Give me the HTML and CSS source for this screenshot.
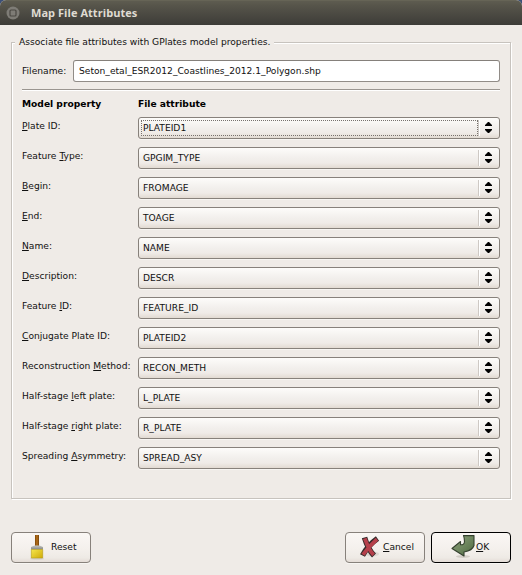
FILE: index.html
```html
<!DOCTYPE html>
<html lang="en">
<head>
<meta charset="utf-8">
<title>Map File Attributes</title>
<link rel="stylesheet" href="styles.css">
</head>
<body>
<div class="window">
  <header class="titlebar">
    <svg class="close" width="14" height="14" viewBox="0 0 14 14"><circle cx="7" cy="7" r="6.500" fill="#7e7c76"/><rect x="4" y="4" width="6" height="6" rx="1" fill="#7e7c76" stroke="#4b4943" stroke-width="1.2"/></svg>
    <h1>Map File Attributes</h1>
  </header>
  <main>
    <fieldset class="group">
      <legend>Associate file attributes with GPlates model properties.</legend>
      <div class="file"><label for="fn">Filename:</label><input id="fn" type="text" value="Seton_etal_ESR2012_Coastlines_2012.1_Polygon.shp"></div>
      <div class="rule"></div>
      <div class="row head"><b>Model property</b><b>File attribute</b></div>
      <div id="rows"></div>
    </fieldset>
    <footer>
      <button class="btn reset">
        <svg width="24" height="26" viewBox="0 0 24 26">
          <defs>
            <linearGradient id="y" x2="1" y2="1"><stop offset="0" stop-color="#f5e64c"/><stop offset="1" stop-color="#cfaa08"/></linearGradient>
            <linearGradient id="w"><stop stop-color="#7d4606"/><stop offset=".5" stop-color="#b8721c"/><stop offset="1" stop-color="#70400a"/></linearGradient>
            <linearGradient id="m" x2="0" y2="1"><stop stop-color="#c4c5c2"/><stop offset="1" stop-color="#858783"/></linearGradient>
          </defs>
          <ellipse cx="12" cy="23.800" rx="7" ry="1" fill="#d5d0c9"/>
          <path d="M10 0h4V11.500h-4z" fill="url(#w)"/>
          <path d="M6 14.500V12l3.500-1.500h5L18 12v2.500z" fill="url(#m)"/>
          <path d="M6.300 14.500h11.400V23H6.300z" fill="url(#y)" stroke="#b39a14" stroke-width=".6"/>
        </svg>
        <span>Reset</span>
      </button>
      <button class="btn cancel">
        <svg width="24" height="26" viewBox="0 0 24 26">
          <ellipse cx="14" cy="19" rx="7" ry="2.500" fill="#ddd8d2"/>
          <path d="M6.500 2.500C8.500 9 12.500 17 16 20.500M19.500 3.500C14.500 7 8 14 4.500 20.500" fill="none" stroke="#332b2b" stroke-width="5.600"/>
          <path d="M6.800 3.300C9 9.500 12.500 16.800 15.600 19.900M19 4.200C14.500 8 8.500 14.500 5 19.800" fill="none" stroke="#b5404b" stroke-width="3.800"/>
        </svg>
        <span><u>C</u>ancel</span>
      </button>
      <button class="btn ok">
        <svg width="24" height="26" viewBox="0 0 24 26">
          <defs><linearGradient id="g" x2="1" y2="1"><stop stop-color="#91a67f"/><stop offset="1" stop-color="#4d6840"/></linearGradient></defs>
          <ellipse cx="12" cy="21.500" rx="7" ry="1.500" fill="#d2cdc6"/>
          <path d="M12.500 .600h10.500V10.500Q21.500 15.500 13 17v4L1 13.500 9.500 6.500V9.800Q13.500 10 13.500 6.500 13.500 3 12.500 .600z" fill="url(#g)" stroke="#34402e" stroke-width="1.100" stroke-linejoin="round"/>
        </svg>
        <span><u>O</u>K</span>
      </button>
    </footer>
  </main>
</div>
<script src="rows.js"></script>
</body>
</html>
```
FILE: styles.css
```css
* { box-sizing: border-box; }
body { margin: 0; background: #3c5078; font: 9.13px "DejaVu Sans", sans-serif; color: #111; }
.window { width: 522px; height: 575px; background: #efebe7; border-radius: 6px 6px 0 0; overflow: hidden; }
.titlebar { height: 25px; padding: 0 0 0 6px; display: flex; align-items: center; gap: 11px; background: linear-gradient(#5e5c50, #56544a 20%, #3d3c38); border-top: 1px solid #666456; }
.titlebar h1 { margin: 0; font: 700 11px "Open Sans", sans-serif; color: #dfdbd2; letter-spacing: .05px; line-height: 24px; }
main { padding: 11px 11px 0; }
.group { margin: 0; height: 463px; min-width: 0; padding: 0 10px; border: 1px solid #c7c3be; box-shadow: 1px 1px #fff, inset 1px 1px #fff; }
legend { height: 13px; line-height: 12px; margin-left: -7px; padding: 0 4px; background: #efebe7; white-space: nowrap; }
.file { display: flex; align-items: center; height: 22px; margin-top: 11px; }
.file label { width: 51px; }
.file input { flex: 1; min-width: 0; height: 22px; padding: 0 5px 1px; border: 1px solid #918c87; border-top-color: #85807b; border-radius: 3px; font: inherit; color: inherit; background: #fff; outline: 0; }
.rule { height: 2px; margin-top: 7px; background: #9a9590; border-bottom: 1px solid #fff; }
.row { display: grid; grid-template-columns: 116px 362px; height: 30px; }
.head { height: 26px; line-height: 11px; padding-top: 8px; color: #000; }
.row label { line-height: 11px; padding-top: 4px; white-space: nowrap; }
u { text-decoration: underline; text-underline-offset: 1px; text-decoration-thickness: 1px; text-decoration-skip-ink: none; }
.combo { display: flex; align-items: center; height: 22px; border: 1px solid #87817b; border-radius: 3px; padding: 2px 7px 2px 2px; background: linear-gradient(#fdfcfa, #f2efec 50%, #efebe7 75%, #e2dad2); box-shadow: 0 1px #f7f5f2; }
.combo span { flex: 1; height: 16px; line-height: 16px; border: 1px solid transparent; padding: 0 1px; display: flex; align-items: center; }
.combo.focus span { border: 1px dotted #77726d; }
.combo i { width: 2px; height: 16px; background: #cec9c4; border-right: 1px solid #fff; }
.combo svg { margin-left: 5px; }
footer { display: flex; margin-top: 33px; }
.btn { width: 80px; height: 31px; padding: 0; display: flex; align-items: center; border: 1px solid #87817b; border-radius: 4px; background: linear-gradient(#faf7f4, #f4f0ec 55%, #eeeae5 85%, #e4dcd6); font: inherit; color: inherit; box-shadow: 0 1px #f7f5f2; }
.btn span { padding-bottom: 1px; }
.reset svg { margin-left: 13px; }
.reset span { margin-left: 2px; }
.cancel { margin-left: auto; }
.cancel svg { margin-left: 12px; }
.cancel span { margin-left: 1px; }
.ok { margin-left: 6px; border-color: #000; }
.ok svg { margin-left: 19px; }
.ok span { margin-left: 1px; }
```
FILE: rows.js
```js
const rows = [
  ["<u>P</u>late ID:", "PLATEID1"],
  ["Feature <u>T</u>ype:", "GPGIM_TYPE"],
  ["<u>B</u>egin:", "FROMAGE"],
  ["<u>E</u>nd:", "TOAGE"],
  ["<u>N</u>ame:", "NAME"],
  ["<u>D</u>escription:", "DESCR"],
  ["Feature <u>I</u>D:", "FEATURE_ID"],
  ["<u>C</u>onjugate Plate ID:", "PLATEID2"],
  ["Reconstruction <u>M</u>ethod:", "RECON_METH"],
  ["Half-stage <u>l</u>eft plate:", "L_PLATE"],
  ["Half-stage <u>r</u>ight plate:", "R_PLATE"],
  ["Spreading <u>A</u>symmetry:", "SPREAD_ASY"]
];
document.getElementById("rows").innerHTML = rows.map(([label, value], n) =>
  `<div class="row"><label>${label}</label><div class="combo${n ? "" : " focus"}"><span>${value}</span><i></i><svg width="7" height="12" viewBox="0 0 7 12"><path d="M0 4V3L3 0h1L7 3v1zM0 7h7v1L4 11H3L0 8z"/></svg></div></div>`
).join("");
```
